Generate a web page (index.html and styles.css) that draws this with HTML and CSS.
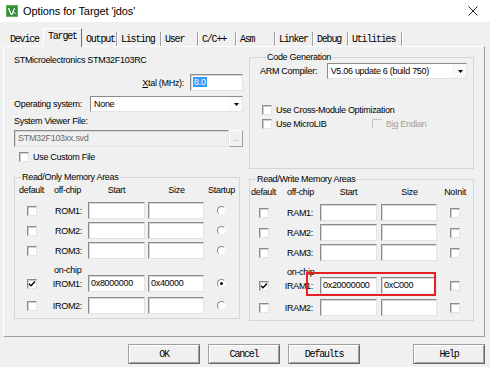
FILE: index.html
```html
<!DOCTYPE html>
<html>
<head>
  <meta charset="utf-8">
  <title>Options for Target 'jdos'</title>
  <link rel="stylesheet" href="styles.css">
</head>
<body>
  <div class="window">
    <div class="titlebar">
      <svg class="app-icon" width="12" height="12" viewBox="0 0 12 12">
        <rect x="0.5" y="0.5" width="11" height="11" fill="#2f8d3c" stroke="#63b055"/>
        <path d="M2.5 3 L5 9.2 L6.2 9.2 L8.6 3" fill="none" stroke="#fff" stroke-width="1.3"/>
        <path d="M7.4 6.6 L9.6 8.8" stroke="#fff" stroke-width="1"/>
      </svg>
      <span class="title">Options for Target 'jdos'</span>
      <svg class="close" width="10" height="10" viewBox="0 0 10 10">
        <path d="M0.5 0.5 L9.5 9.5 M9.5 0.5 L0.5 9.5" stroke="#222" stroke-width="1"/>
      </svg>
    </div>

    <div class="dialog">
      <div class="tabs">
        <div class="tab first">Device</div>
        <div class="tab active">Target</div>
        <div class="tab">Output</div>
        <div class="tab">Listing</div>
        <div class="tab">User</div>
        <div class="tab">C/C++</div>
        <div class="tab">Asm</div>
        <div class="tab">Linker</div>
        <div class="tab">Debug</div>
        <div class="tab">Utilities</div>
      </div>

      <div class="panel">
        <div class="col">
          <div class="device">STMicroelectronics STM32F103RC</div>

          <div class="xtal-row">
            <span><u>X</u>tal (MHz):</span>
            <div class="edit xtal"><span class="sel">8.0</span></div>
          </div>

          <div class="os-row">
            <span class="os-label">Operating system:</span>
            <div class="combo os">
              <span class="combo-text">None</span>
              <span class="combo-btn"><svg width="5" height="3" viewBox="0 0 5 3"><path d="M0 0 H5 L2.5 3 Z" fill="#000"/></svg></span>
            </div>
          </div>

          <div class="svf-label">System Viewer File:</div>

          <div class="file-row">
            <div class="edit disabled file">STM32F103xx.svd</div>
            <div class="dots">...</div>
          </div>

          <div class="check-row custom">
            <span class="cb"></span>
            <span>Use Custom File</span>
          </div>

          <fieldset class="group mem rom">
            <legend>Read/Only Memory Areas</legend>
            <div class="mem-row mem-head">
              <span class="center">default</span>
              <span class="head-off">off-chip</span>
              <span class="head-col">Start</span>
              <span class="head-col">Size</span>
              <span class="center">Startup</span>
            </div>
            <div class="mem-row first-row">
              <span class="center"><span class="cb"></span></span>
              <span class="mem-label">ROM1:</span>
              <span class="edit mem-edit"></span>
              <span class="edit mem-edit"></span>
              <span class="center"><span class="radio"></span></span>
            </div>
            <div class="mem-row">
              <span class="center"><span class="cb"></span></span>
              <span class="mem-label">ROM2:</span>
              <span class="edit mem-edit"></span>
              <span class="edit mem-edit"></span>
              <span class="center"><span class="radio"></span></span>
            </div>
            <div class="mem-row">
              <span class="center"><span class="cb"></span></span>
              <span class="mem-label">ROM3:</span>
              <span class="edit mem-edit"></span>
              <span class="edit mem-edit"></span>
              <span class="center"><span class="radio"></span></span>
            </div>
            <div class="on-chip">on-chip</div>
            <div class="mem-row chip-row">
              <span class="center"><span class="cb checked"><svg width="8" height="8" viewBox="0 0 8 8"><path d="M1 3.8 L3 5.8 L7 1.6" fill="none" stroke="#000" stroke-width="1.4"/></svg></span></span>
              <span class="mem-label">IROM1:</span>
              <span class="edit mem-edit">0x8000000</span>
              <span class="edit mem-edit">0x40000</span>
              <span class="center"><span class="radio on"></span></span>
            </div>
            <div class="mem-row last-row">
              <span class="center"><span class="cb"></span></span>
              <span class="mem-label">IROM2:</span>
              <span class="edit mem-edit"></span>
              <span class="edit mem-edit"></span>
              <span class="center"><span class="radio"></span></span>
            </div>
          </fieldset>
        </div>

        <div class="col">
          <fieldset class="group codegen">
            <legend>Code Generation</legend>
            <div class="compiler-row">
              <span class="compiler-label">ARM Compiler:</span>
              <div class="combo compiler">
                <span class="combo-text">V5.06 update 6 (build 750)</span>
                <span class="combo-btn"><svg width="5" height="3" viewBox="0 0 5 3"><path d="M0 0 H5 L2.5 3 Z" fill="#000"/></svg></span>
              </div>
            </div>
            <div class="check-row opt-first">
              <span class="cb"></span>
              <span>Use Cross-Module Optimization</span>
            </div>
            <div class="check-row opt-second">
              <span class="opt-wide">
                <span class="cb"></span>
                <span>Use MicroLIB</span>
              </span>
              <span class="cb disabled"></span>
              <span class="dim">B<u>i</u>g Endian</span>
            </div>
          </fieldset>

          <fieldset class="group mem ram">
            <legend>Read/Write Memory Areas</legend>
            <div class="mem-row mem-head">
              <span class="center">default</span>
              <span class="head-off">off-chip</span>
              <span class="head-col">Start</span>
              <span class="head-col">Size</span>
              <span class="center">NoInit</span>
            </div>
            <div class="mem-row first-row">
              <span class="center"><span class="cb"></span></span>
              <span class="mem-label">RAM1:</span>
              <span class="edit mem-edit"></span>
              <span class="edit mem-edit"></span>
              <span class="center"><span class="cb"></span></span>
            </div>
            <div class="mem-row">
              <span class="center"><span class="cb"></span></span>
              <span class="mem-label">RAM2:</span>
              <span class="edit mem-edit"></span>
              <span class="edit mem-edit"></span>
              <span class="center"><span class="cb"></span></span>
            </div>
            <div class="mem-row">
              <span class="center"><span class="cb"></span></span>
              <span class="mem-label">RAM3:</span>
              <span class="edit mem-edit"></span>
              <span class="edit mem-edit"></span>
              <span class="center"><span class="cb"></span></span>
            </div>
            <div class="on-chip">on-chip</div>
            <div class="mem-row chip-row marked">
              <span class="center"><span class="cb checked"><svg width="8" height="8" viewBox="0 0 8 8"><path d="M1 3.8 L3 5.8 L7 1.6" fill="none" stroke="#000" stroke-width="1.4"/></svg></span></span>
              <span class="mem-label">IRAM1:</span>
              <span class="edit mem-edit">0x20000000</span>
              <span class="edit mem-edit">0xC000</span>
              <span class="center"><span class="cb"></span></span>
              <span class="highlight"></span>
            </div>
            <div class="mem-row last-row">
              <span class="center"><span class="cb"></span></span>
              <span class="mem-label">IRAM2:</span>
              <span class="edit mem-edit"></span>
              <span class="edit mem-edit"></span>
              <span class="center"><span class="cb"></span></span>
            </div>
          </fieldset>
        </div>
      </div>

      <div class="buttons">
        <button class="btn">OK</button>
        <button class="btn">Cancel</button>
        <button class="btn">Defaults</button>
        <button class="btn help">Help</button>
      </div>
    </div>
  </div>
</body>
</html>
```

FILE: styles.css
```css
body {
  margin: 0;
  background-color: #f0f0f0;
  font-family: "Liberation Sans", Arial, sans-serif;
  font-size: 9px;
  letter-spacing: -0.3px;
  color: #000;
}

.window {
  width: 490px;
  height: 367px;
  overflow: hidden;
}

/* title bar */
.titlebar {
  display: flex;
  align-items: center;
  height: 22px;
  padding: 0 12px 0 6px;
  background-color: #ffffff;
}

.title {
  margin-left: 5px;
  font-size: 11px;
  letter-spacing: -0.1px;
}

.close {
  margin-left: auto;
}

.dialog {
  padding: 6px 0 0 3px;
}

/* tabs */
.tabs {
  display: grid;
  grid-template-columns: 40px 39px 35px 44px 37px 38px 39px 38px 35px 54px;
  align-items: end;
  width: 399px;
  height: 18px;
}

.tab {
  height: 14px;
  line-height: 15px;
  padding-left: 4px;
  border-right: 1px solid #a0a0a0;
  box-shadow: 1px 0 0 #ffffff;
  font-family: "Liberation Mono", monospace;
  font-size: 10px;
  letter-spacing: -1.2px;
  white-space: nowrap;
}

.tab.first {
  padding-left: 7px;
  border-right: none;
  box-shadow: none;
}

.tab.active {
  position: relative;
  z-index: 1;
  height: 18px;
  line-height: 16px;
  margin-bottom: -1px;
  border-top: 1px solid #ffffff;
  border-left: 1px solid #ffffff;
  border-right: 1px solid #696969;
  box-shadow: none;
  background-color: #f0f0f0;
}

/* tab page */
.panel {
  box-sizing: border-box;
  width: 482px;
  height: 291px;
  display: grid;
  grid-template-columns: 229px 225px;
  column-gap: 6px;
  padding: 5px 10px 0 10px;
  border: 1px solid;
  border-color: #ffffff #a0a0a0 #a0a0a0 #ffffff;
}

.col {
  display: flex;
  flex-direction: column;
}

.device {
  margin-top: 3px;
  line-height: 11px;
}

.edit {
  box-sizing: border-box;
  height: 17px;
  background-color: #ffffff;
  border: 1px solid;
  border-color: #8c8c8c #e3e3e3 #e3e3e3 #8c8c8c;
  box-shadow: inset 1px 1px 0 #d6d6d6;
  line-height: 14px;
  padding-left: 2px;
  white-space: nowrap;
}

.edit.disabled {
  background-color: #f0f0f0;
  color: #6d6d6d;
}

.xtal-row {
  display: flex;
  justify-content: flex-end;
  align-items: center;
  gap: 6px;
  margin-top: 8px;
}

.xtal {
  width: 53px;
}

.sel {
  background-color: #3399ff;
  color: #ffffff;
  padding: 0 1px;
}

.os-row {
  display: flex;
  align-items: center;
  margin-top: 5px;
}

.os-label {
  width: 76px;
}

.combo {
  box-sizing: border-box;
  display: flex;
  align-items: center;
  height: 16px;
  background-color: #ffffff;
  border: 1px solid;
  border-color: #8c8c8c #e3e3e3 #e3e3e3 #8c8c8c;
}

.combo-text {
  flex: 1;
  padding-left: 3px;
}

.combo-btn {
  display: flex;
  align-items: center;
  justify-content: center;
  box-sizing: border-box;
  width: 13px;
  height: 14px;
  border-left: 1px solid #f4f4f4;
  background-color: #fafafa;
}

.os {
  width: 153px;
}

.svf-label {
  margin-top: 4px;
  line-height: 11px;
}

.file-row {
  display: flex;
  margin-top: 3px;
}

.file {
  width: 215px;
  padding-left: 3px;
}

.dots {
  box-sizing: border-box;
  width: 14px;
  height: 17px;
  border: 1px solid;
  border-color: #ffffff #a0a0a0 #a0a0a0 #ffffff;
  color: #8c8c8c;
  text-align: center;
  line-height: 16px;
  font-size: 7px;
}

.check-row {
  display: flex;
  align-items: center;
  gap: 4px;
  height: 12px;
}

.check-row.custom {
  margin-top: 4px;
  padding-left: 5px;
}

.cb {
  display: inline-flex;
  align-items: center;
  justify-content: center;
  box-sizing: border-box;
  width: 10px;
  height: 10px;
  background-color: #ffffff;
  border: 1px solid;
  border-color: #8c8c8c #e3e3e3 #e3e3e3 #8c8c8c;
  box-shadow: inset 1px 1px 0 #cfcfcf;
  flex: none;
}

.cb.disabled {
  background-color: #f0f0f0;
  border-color: #c4c4c4 #f4f4f4 #f4f4f4 #c4c4c4;
  box-shadow: none;
}

.dim {
  color: #a0a0a0;
}

.radio {
  display: inline-block;
  box-sizing: border-box;
  width: 9px;
  height: 9px;
  border-radius: 50%;
  border: 1px solid;
  border-color: #8c8c8c #f4f4f4 #f4f4f4 #8c8c8c;
  background-color: #ffffff;
  position: relative;
}

.radio.on::after {
  content: "";
  position: absolute;
  left: 2px;
  top: 2px;
  width: 3px;
  height: 3px;
  border-radius: 50%;
  background-color: #000;
}

/* group boxes */
.group {
  margin: 0;
  padding: 0;
  min-width: 0;
  border: 1px solid #d5d5d5;
}

.group legend {
  margin-left: 6px;
  padding: 0 1px;
  line-height: 11px;
}

.codegen {
  margin-top: 0;
  padding: 0 6px 38px 10px;
}

.compiler-row {
  display: flex;
  align-items: center;
}

.compiler-label {
  width: 67px;
}

.compiler {
  width: 141px;
}

.opt-first {
  margin-top: 25px;
  padding-left: 2px;
}

.opt-second {
  margin-top: 2px;
  padding-left: 2px;
}

.opt-wide {
  display: flex;
  align-items: center;
  gap: 4px;
  width: 106px;
}

/* memory areas */
.mem {
  margin-top: 9px;
  padding-bottom: 4px;
}

.rom {
  margin-right: 3px;
  --cols: 33px 40px 60px 56px 1fr;
  --off: 6px;
  --label: 6px;
}

.ram {
  margin-top: 5px;
  --cols: 27px 43px 61px 56px 1fr;
  --off: 10px;
  --label: 7px;
}

.mem-row {
  position: relative;
  display: grid;
  grid-template-columns: var(--cols);
  align-items: center;
  height: 17px;
  margin-top: 3px;
}

.mem-head {
  height: 11px;
  margin-top: 2px;
  line-height: 11px;
}

.first-row {
  margin-top: 6px;
}

.chip-row {
  margin-top: 0;
}

.last-row {
  margin-top: 5px;
}

.center {
  display: flex;
  justify-content: center;
}

.head-off {
  padding-left: var(--off);
}

.head-col {
  width: 57px;
  text-align: center;
}

.mem-label {
  text-align: right;
  padding-right: var(--label);
}

.mem-edit {
  width: 57px;
}

.mem-edit + .mem-edit {
  width: 56px;
}

.on-chip {
  margin-top: 6px;
  height: 10px;
  line-height: 10px;
  padding-left: calc(var(--off) + 33px);
}

.ram .on-chip {
  padding-left: 37px;
}

.highlight {
  position: absolute;
  left: 56px;
  top: -5px;
  width: 130px;
  height: 24px;
  box-sizing: border-box;
  border: 2px solid #e52222;
}

/* bottom buttons */
.buttons {
  display: flex;
  gap: 8px;
  margin-top: 7px;
  padding-left: 125px;
}

.btn {
  box-sizing: border-box;
  width: 72px;
  height: 20px;
  padding: 0;
  background-color: #f0f0f0;
  border: 1px solid;
  border-color: #a0a0a0 #696969 #696969 #a0a0a0;
  box-shadow: inset 1px 1px 0 #ffffff, inset -1px -1px 0 #a0a0a0;
  font-family: "Liberation Mono", monospace;
  font-size: 10px;
  letter-spacing: -1.2px;
  color: #000;
}

.btn.help {
  margin-left: 45px;
}
```
